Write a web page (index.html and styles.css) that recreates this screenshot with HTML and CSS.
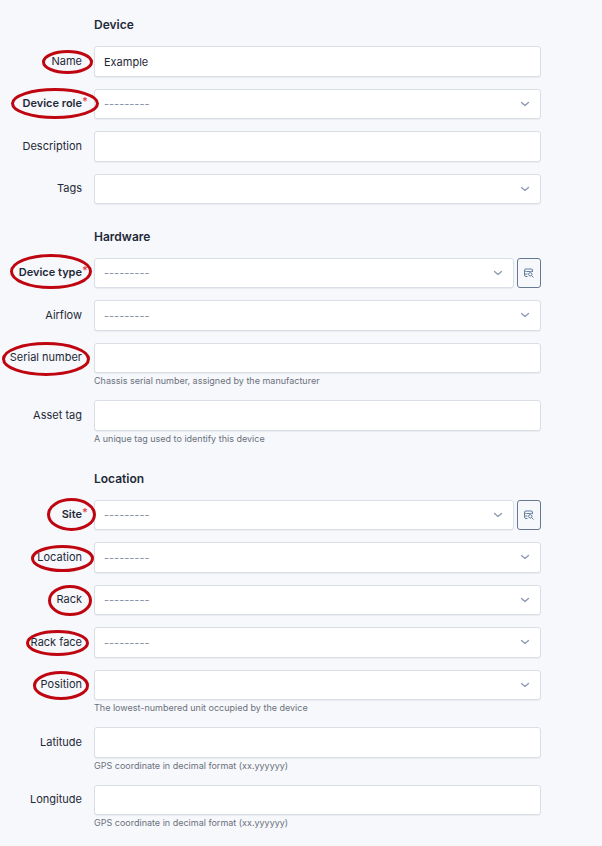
FILE: index.html
```html
<!DOCTYPE html>
<html lang="en">
<head>
<meta charset="utf-8">
<meta name="viewport" content="width=device-width, initial-scale=1">
<title>Device</title>
<link rel="stylesheet" href="styles.css">
</head>
<body>
<svg class="sprite" aria-hidden="true">
  <symbol id="chevron" viewBox="0 0 10 10"><path d="M1.500 3.500L5 6.500l3.500-3" fill="none" stroke="currentColor" stroke-width="1.200" stroke-linecap="round" stroke-linejoin="round"/></symbol>
  <symbol id="db-search" viewBox="0 0 10 10"><g fill="none" stroke="currentColor" stroke-width="1"><path d="M3.500 8.500H2Q.5 8.500.5 7V2Q.5 1 2 1h5q1.500 0 1.500 1v2M.5 2.500Q1 3.500 2.500 3.500h4Q8 3.500 8.500 2.500M.5 6h3"/><circle cx="6.300" cy="6.300" r="1.700"/><path d="M7.500 7.500l2 2"/></g></symbol>
</svg>
<form class="form">
  <section class="group group-first">
    <h2 class="title">Device</h2>
    <div class="field"><label class="label" for="name">Name</label><div class="control"><input class="box" id="name" type="text" value="Example"></div></div>
    <div class="field"><label class="label required" for="role">Device role</label><div class="control"><div class="picker"><select class="box" id="role"><option>---------</option></select><svg class="chevron"><use href="#chevron"/></svg></div></div></div>
    <div class="field"><label class="label" for="description">Description</label><div class="control"><input class="box" id="description" type="text"></div></div>
    <div class="field"><label class="label" for="tags">Tags</label><div class="control"><div class="picker"><select class="box" id="tags"><option></option></select><svg class="chevron"><use href="#chevron"/></svg></div></div></div>
  </section>

  <section class="group">
    <h2 class="title">Hardware</h2>
    <div class="field"><label class="label required" for="type">Device type</label><div class="control"><div class="picker"><select class="box" id="type"><option>---------</option></select><svg class="chevron"><use href="#chevron"/></svg></div><button class="lookup" type="button" aria-label="Search device types"><svg class="lookup-icon"><use href="#db-search"/></svg></button></div></div>
    <div class="field"><label class="label" for="airflow">Airflow</label><div class="control"><div class="picker"><select class="box" id="airflow"><option>---------</option></select><svg class="chevron"><use href="#chevron"/></svg></div></div></div>
    <div class="field"><label class="label" for="serial">Serial number</label><div class="control"><input class="box" id="serial" type="text"></div><p class="help">Chassis serial number, assigned by the manufacturer</p></div>
    <div class="field"><label class="label" for="asset">Asset tag</label><div class="control"><input class="box" id="asset" type="text"></div><p class="help">A unique tag used to identify this device</p></div>
  </section>

  <section class="group">
    <h2 class="title">Location</h2>
    <div class="field"><label class="label required" for="site">Site</label><div class="control"><div class="picker"><select class="box" id="site"><option>---------</option></select><svg class="chevron"><use href="#chevron"/></svg></div><button class="lookup" type="button" aria-label="Search sites"><svg class="lookup-icon"><use href="#db-search"/></svg></button></div></div>
    <div class="field"><label class="label" for="location">Location</label><div class="control"><div class="picker"><select class="box" id="location"><option>---------</option></select><svg class="chevron"><use href="#chevron"/></svg></div></div></div>
    <div class="field"><label class="label" for="rack">Rack</label><div class="control"><div class="picker"><select class="box" id="rack"><option>---------</option></select><svg class="chevron"><use href="#chevron"/></svg></div></div></div>
    <div class="field"><label class="label" for="face">Rack face</label><div class="control"><div class="picker"><select class="box" id="face"><option>---------</option></select><svg class="chevron"><use href="#chevron"/></svg></div></div></div>
    <div class="field"><label class="label" for="position">Position</label><div class="control"><div class="picker"><select class="box" id="position"><option></option></select><svg class="chevron"><use href="#chevron"/></svg></div></div><p class="help">The lowest-numbered unit occupied by the device</p></div>
    <div class="field"><label class="label" for="latitude">Latitude</label><div class="control"><input class="box" id="latitude" type="text"></div><p class="help">GPS coordinate in decimal format (xx.yyyyyy)</p></div>
    <div class="field"><label class="label" for="longitude">Longitude</label><div class="control"><input class="box" id="longitude" type="text"></div><p class="help">GPS coordinate in decimal format (xx.yyyyyy)</p></div>
  </section>

  <svg class="marks" viewBox="0 0 100 720" aria-hidden="true">
    <ellipse cx="67.500" cy="62" rx="24" ry="10.500"/>
    <ellipse cx="55" cy="103.500" rx="42.500" ry="14"/>
    <ellipse cx="51" cy="271.500" rx="39.500" ry="16"/>
    <ellipse cx="46" cy="359" rx="42.500" ry="15.500"/>
    <ellipse cx="71.500" cy="514.500" rx="23" ry="15"/>
    <ellipse cx="62.500" cy="558.500" rx="30" ry="12"/>
    <ellipse cx="70" cy="600.500" rx="20.500" ry="14"/>
    <ellipse cx="57.500" cy="643" rx="30" ry="11.500"/>
    <ellipse cx="61" cy="685.500" rx="26.500" ry="13"/>
  </svg>
</form>
</body>
</html>
```
FILE: styles.css
```css
* { box-sizing: border-box; }

body {
  margin: 0;
  background: #f6f8fc;
  color: #1f2937;
  font: 11px/16px Inter, "Liberation Sans", sans-serif;
}

.sprite { display: none; }

.form {
  position: relative;
  padding: 15px 61px 16px 0;
}

.group {
  display: flex;
  flex-direction: column;
  gap: 12px;
  margin-bottom: 23px;
}

.group:last-of-type { margin-bottom: 0; }

.title {
  margin: 0 0 0 94px;
  font-size: 12px;
  line-height: 19px;
  font-weight: 600;
}

.field {
  --box-height: 30px;
  display: grid;
  grid-template-columns: 82px minmax(0, 1fr);
  column-gap: 12px;
}

/* Rows alternate between the two box heights. */
.group:not(.group-first) .field:nth-of-type(even),
.group-first .field:nth-of-type(odd) { --box-height: 31px; }

.label {
  position: relative;
  justify-self: end;
  align-self: start;
  line-height: calc(var(--box-height) - 1px);
  white-space: nowrap;
}

.required { font-weight: 600; }

.required::after {
  content: "*";
  position: absolute;
  left: 100%;
  top: -2px;
  color: #dc4b50;
}

.control {
  display: flex;
  gap: 3px;
}

.picker {
  position: relative;
  flex: 1;
}

.box {
  display: block;
  width: 100%;
  height: var(--box-height);
  padding: 0 9px;
  border: 1px solid #dadfe6;
  border-radius: 3px;
  background: #fff;
  box-shadow: 0 1px 1px rgba(31, 42, 61, 0.06);
  color: inherit;
  font: inherit;
}

select.box {
  appearance: none;
  color: #8491a7;
}

.chevron {
  position: absolute;
  right: 11px;
  top: 10px;
  width: 10px;
  height: 10px;
  color: #8996ae;
  pointer-events: none;
}

.lookup {
  display: grid;
  place-items: center;
  width: 24px;
  height: var(--box-height);
  padding: 0;
  border: 1px solid #667892;
  border-radius: 3px;
  background: transparent;
  color: #64809c;
}

.lookup-icon {
  width: 10px;
  height: 10px;
}

.help {
  grid-column: 2;
  margin: 0;
  font-size: 9px;
  line-height: 15px;
  color: #6c717b;
}

.marks {
  position: absolute;
  left: 0;
  top: 0;
  width: 100px;
  height: 720px;
  fill: none;
  stroke: #bf0610;
  stroke-width: 3px;
  pointer-events: none;
}
```
